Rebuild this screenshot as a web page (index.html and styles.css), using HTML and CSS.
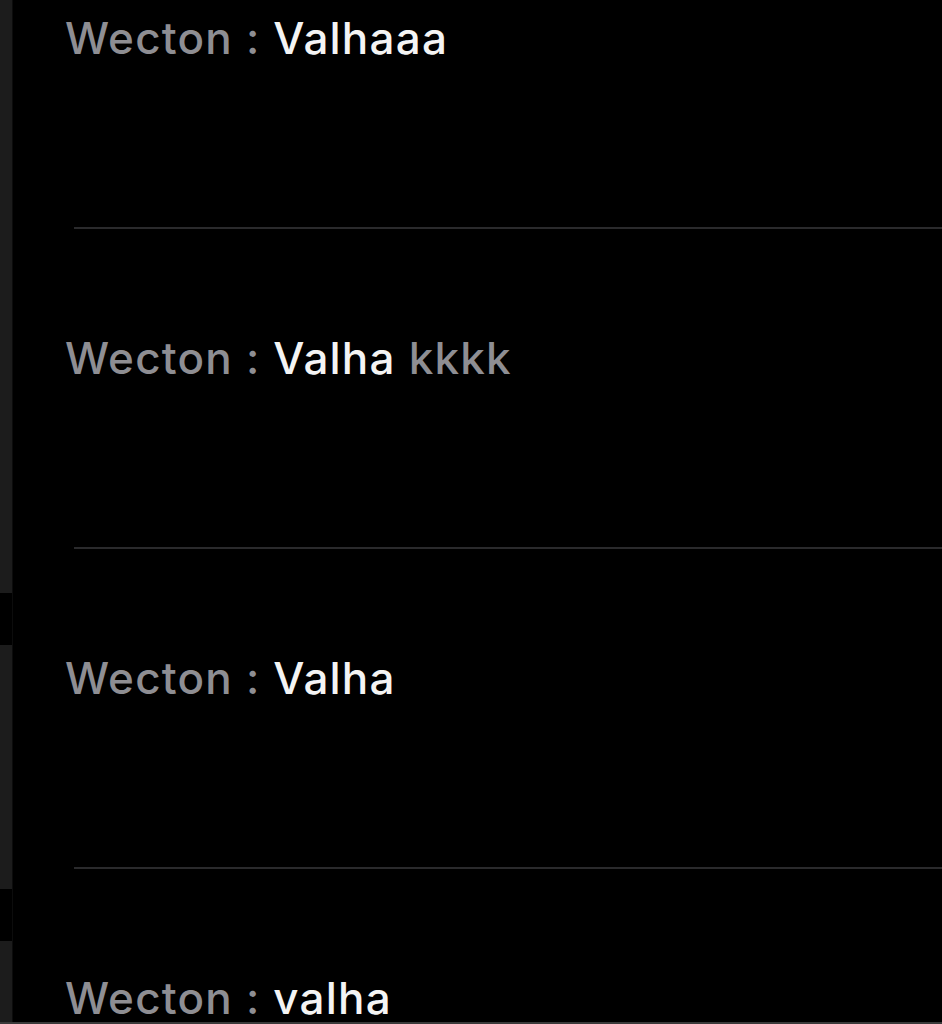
FILE: index.html
```html
<!DOCTYPE html>
<html>
<head>
<meta charset="utf-8">
<link rel="stylesheet" href="styles.css">
</head>
<body>
<div class="screen">
  <div class="edge">
    <div class="seg seg-a"></div>
    <div class="gap"></div>
    <div class="seg seg-b"></div>
    <div class="gap"></div>
    <div class="seg seg-c"></div>
  </div>
  <div class="list">
    <div class="item">
      <p class="msg"><span class="name">Wecton : </span><span class="text">Valhaaa</span></p>
      <div class="sep"></div>
    </div>
    <div class="item">
      <p class="msg"><span class="name">Wecton : </span><span class="text">Valha</span> <span class="name">kkkk</span></p>
      <div class="sep"></div>
    </div>
    <div class="item">
      <p class="msg"><span class="name">Wecton : </span><span class="text">Valha</span></p>
      <div class="sep"></div>
    </div>
    <div class="item">
      <p class="msg"><span class="name">Wecton : </span><span class="text">valha</span></p>
    </div>
  </div>
</div>
</body>
</html>
```
FILE: styles.css
```css
html, body {
  margin: 0;
  padding: 0;
  background: #000;
}
.screen {
  display: flex;
  width: 942px;
  height: 1022px;
  overflow: hidden;
  border-bottom: 2px solid #3a3a3a;
  font-family: Inter, "Liberation Sans", Arial, sans-serif;
}
.edge {
  width: 12px;
  flex: none;
  display: flex;
  flex-direction: column;
  border-right: 1px solid #0c0c0c;
}
.seg { background: #1c1c1c; }
.seg-a { height: 593px; }
.seg-b { height: 244px; }
.seg-c { flex: 1; }
.gap { height: 52px; }
.list {
  flex: 1;
  padding-top: 13px;
}
.item {
  padding-left: 52px;
}
.msg {
  margin: 0;
  font-size: 44px;
  font-weight: 500;
  line-height: 50px;
  letter-spacing: 1.2px;
  white-space: nowrap;
}
.name { color: #8e8e93; }
.text { color: #f4f4f4; }
.sep {
  height: 2px;
  background: #2a2a2c;
  margin: 164px 0 104px 9px;
}
```
